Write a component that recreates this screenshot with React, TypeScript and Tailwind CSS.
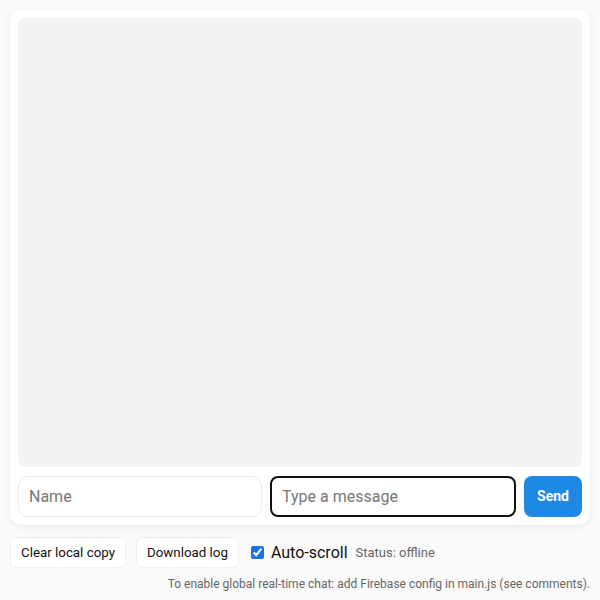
import { useState } from "react";

export default function App() {
  const [autoScroll, setAutoScroll] = useState(true);

  return (
    <div className="min-h-[600px] bg-[#fafafa] p-[10px] font-['Roboto',sans-serif] text-[#111]">
      <div className="flex flex-col gap-[9px] rounded-xl bg-white p-2 shadow-[0_2px_8px_rgba(0,0,0,0.06)]">
        <div className="h-[449px] rounded-lg bg-[#f3f3f3]" />
        <div className="flex gap-[8px]">
          <input
            placeholder="Name"
            className="h-[41px] min-w-0 flex-1 rounded-[10px] border border-[#ececec] bg-white px-[10px] text-[16px] outline-none placeholder:text-[#777]"
          />
          <input
            placeholder="Type a message"
            className="h-[41px] min-w-0 flex-1 rounded-[8px] border-2 border-[#111] bg-white px-[10px] text-[16px] outline-none placeholder:text-[#777]"
          />
          <button className="h-[41px] w-[58px] rounded-[8px] bg-[#1e88e5] text-[14px] font-bold text-white">
            Send
          </button>
        </div>
      </div>

      <div className="mt-[12px] flex items-center gap-[10px]">
        <button className="h-[31px] rounded-[6px] border border-[#f0f0f0] bg-white px-[10px] text-[13.33px]">
          Clear local copy
        </button>
        <button className="h-[31px] rounded-[6px] border border-[#f0f0f0] bg-white px-[10px] text-[13.33px]">
          Download log
        </button>
        <label className="ml-[2px] flex items-center gap-[7px] text-[16px]">
          <input
            type="checkbox"
            checked={autoScroll}
            onChange={(e) => setAutoScroll(e.target.checked)}
            className="h-[13px] w-[13px] accent-[#1a73e8]"
          />
          Auto-scroll
        </label>
        <span className="ml-[-2px] text-[13px] text-[#666]">Status: offline</span>
      </div>

      <div className="mt-[7px] text-right text-[12px] text-[#666]">
        To enable global real-time chat: add Firebase config in main.js (see comments).
      </div>
    </div>
  );
}
